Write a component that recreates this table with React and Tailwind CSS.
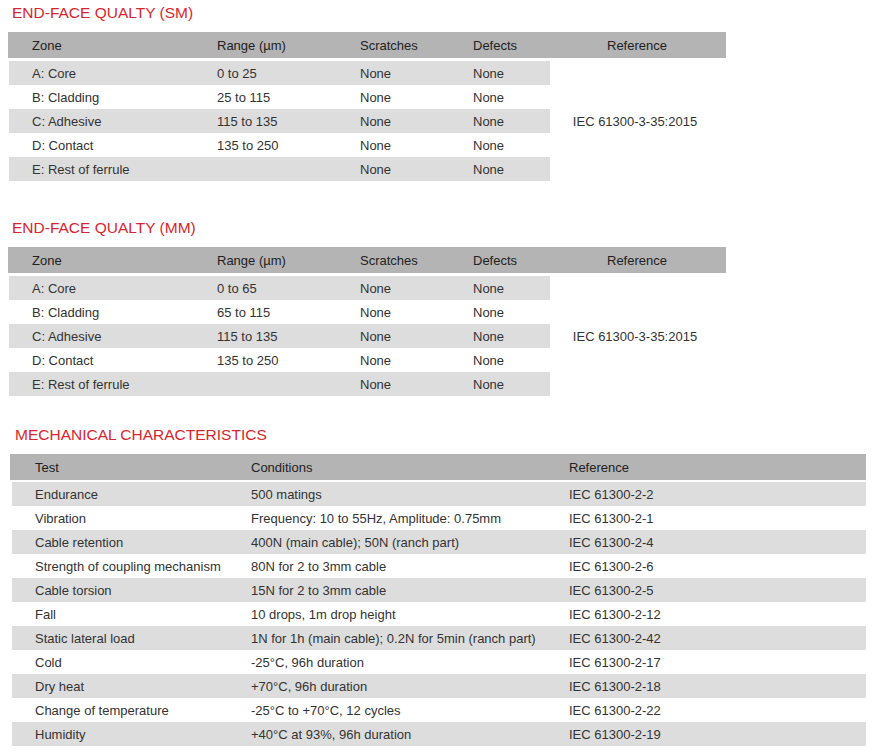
import React from "react";

const smRows = [
  ["A: Core", "0 to 25"],
  ["B: Cladding", "25 to 115"],
  ["C: Adhesive", "115 to 135"],
  ["D: Contact", "135 to 250"],
  ["E: Rest of ferrule", ""],
];

const mmRows = [
  ["A: Core", "0 to 65"],
  ["B: Cladding", "65 to 115"],
  ["C: Adhesive", "115 to 135"],
  ["D: Contact", "135 to 250"],
  ["E: Rest of ferrule", ""],
];

const mechRows = [
  ["Endurance", "500 matings", "IEC 61300-2-2"],
  ["Vibration", "Frequency: 10 to 55Hz, Amplitude: 0.75mm", "IEC 61300-2-1"],
  ["Cable retention", "400N (main cable); 50N (ranch part)", "IEC 61300-2-4"],
  ["Strength of coupling mechanism", "80N for 2 to 3mm cable", "IEC 61300-2-6"],
  ["Cable torsion", "15N for 2 to 3mm cable", "IEC 61300-2-5"],
  ["Fall", "10 drops, 1m drop height", "IEC 61300-2-12"],
  ["Static lateral load", "1N for 1h (main cable); 0.2N for 5min (ranch part)", "IEC 61300-2-42"],
  ["Cold", "-25°C, 96h duration", "IEC 61300-2-17"],
  ["Dry heat", "+70°C, 96h duration", "IEC 61300-2-18"],
  ["Change of temperature", "-25°C to +70°C, 12 cycles", "IEC 61300-2-22"],
  ["Humidity", "+40°C at 93%, 96h duration", "IEC 61300-2-19"],
];

function Heading({ children, className }) {
  return (
    <h2 className={`h-[26px] leading-[26px] mb-[6px] text-[15.5px] text-[#d7262e] ${className}`}>
      {children}
    </h2>
  );
}

function EndFaceTable({ title, rows }) {
  return (
    <section className="pl-[8px]">
      <Heading className="pl-[4px]">{title}</Heading>
      {/* header bar */}
      <div className="w-[718px] h-[26px] pt-[2px] bg-[#b4b4b4] flex items-center text-[#222]">
        <div className="w-[186px] pl-[24px]">Zone</div>
        <div className="w-[143px] pl-[23px]">Range (µm)</div>
        <div className="w-[113px] pl-[23px]">Scratches</div>
        <div className="w-[100px] pl-[23px]">Defects</div>
        <div className="w-[174px] text-center">Reference</div>
      </div>
      <div className="flex mt-[3px]">
        <div className="w-[542px] pl-[1px]">
          {rows.map(([zone, range], i) => (
            <div
              key={zone}
              className={`h-[24px] pt-[1px] flex items-center ${i % 2 === 0 ? "bg-[#dddddd]" : "bg-white"}`}
            >
              <div className="w-[185px] pl-[23px]">{zone}</div>
              <div className="w-[143px] pl-[23px]">{range}</div>
              <div className="w-[113px] pl-[23px]">None</div>
              <div className="w-[100px] pl-[23px]">None</div>
            </div>
          ))}
        </div>
        <div className="w-[170px] pt-[1px] flex items-center justify-center">IEC 61300-3-35:2015</div>
      </div>
    </section>
  );
}

export default function App() {
  return (
    <div
      className="w-[876px] min-h-[754px] bg-white text-[13px] text-[#333]"
      style={{ fontFamily: '"Liberation Sans", Arial, sans-serif' }}
    >
      <EndFaceTable title="END-FACE QUALTY (SM)" rows={smRows} />
      <div className="h-[34px]" />
      <EndFaceTable title="END-FACE QUALTY (MM)" rows={mmRows} />

      <section className="pl-[10px] pt-[26px]">
        <Heading className="pl-[5px]">MECHANICAL CHARACTERISTICS</Heading>
        <div className="w-[856px] h-[26px] pt-[2px] bg-[#b4b4b4] flex items-center text-[#222]">
          <div className="w-[218px] pl-[25px]">Test</div>
          <div className="w-[318px] pl-[23px]">Conditions</div>
          <div className="w-[320px] pl-[23px]">Reference</div>
        </div>
        <div className="mt-[2px] pl-[2px]">
          {mechRows.map(([test, cond, ref], i) => (
            <div
              key={test}
              className={`w-[854px] h-[24px] pt-[1px] flex items-center ${i % 2 === 0 ? "bg-[#dddddd]" : "bg-white"}`}
            >
              <div className="w-[216px] pl-[23px]">{test}</div>
              <div className="w-[318px] pl-[23px]">{cond}</div>
              <div className="w-[320px] pl-[23px]">{ref}</div>
            </div>
          ))}
        </div>
      </section>
    </div>
  );
}
